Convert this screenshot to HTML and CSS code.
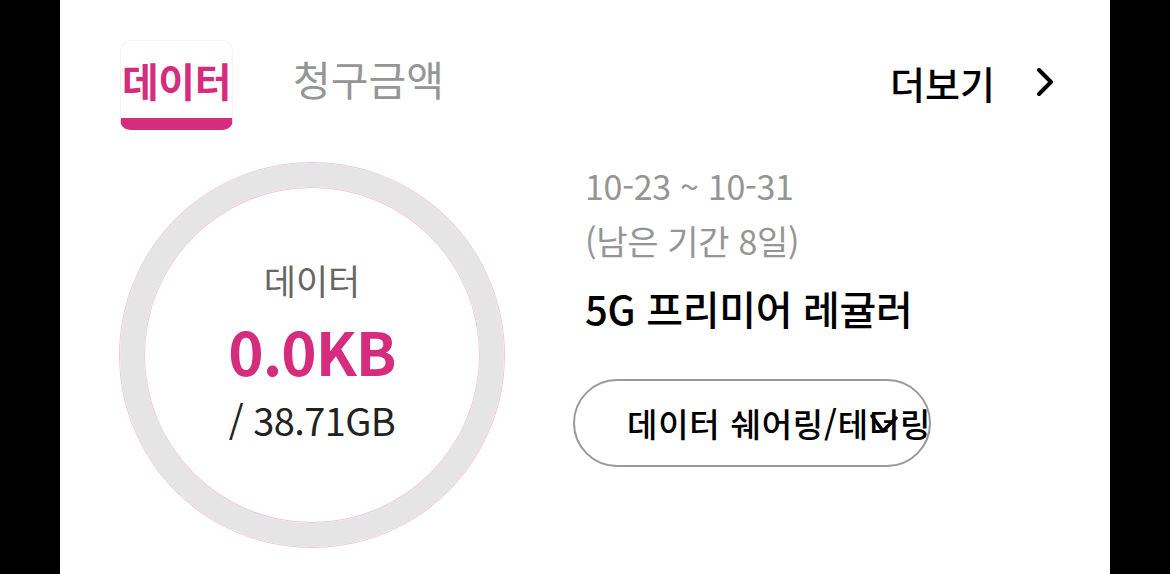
FILE: index.html
```html
<!DOCTYPE html>
<html lang="ko">
<head>
    <meta charset="UTF-8">
    <title>데이터 사용량</title>
    <link rel="stylesheet" href="styles.css">
</head>
<body>
    <div class="card">
        <div class="header">
            <div class="tabs">
                <div class="tab active">데이터</div>
                <div class="tab">청구금액</div>
            </div>
            <div class="more">
                <span>더보기</span>
                <svg width="22" height="32" viewBox="0 0 22 32">
                    <path d="M4 4 L16 16 L4 28" fill="none" stroke="#000" stroke-width="4" stroke-linecap="round" stroke-linejoin="round"/>
                </svg>
            </div>
        </div>

        <div class="usage">
            <div class="ring">
                <div class="ring-label">데이터</div>
                <div class="ring-used">0.0KB</div>
                <div class="ring-total">/ 38.71GB</div>
            </div>

            <div class="info">
                <div class="period">10-23 ~ 10-31</div>
                <div class="period">(남은 기간 8일)</div>
                <div class="plan">5G 프리미어 레귤러</div>
                <div class="share-btn">
                    <span class="share-text">데이터 쉐어링/테더링</span>
                    <svg class="share-arrow" width="30" height="24" viewBox="0 0 30 24">
                        <path d="M3 4 L14 19 L27 6" fill="none" stroke="#000" stroke-width="3.5" stroke-linecap="round" stroke-linejoin="round"/>
                    </svg>
                </div>
            </div>
        </div>
    </div>
</body>
</html>
```

FILE: styles.css
```css
:root {
    --pink: #d52c7e;
    --ring-gray: #e5e5e5;
    --light-text: #959595;
}

body {
    margin: 0;
    background: #000;
    font-family: "Noto Sans CJK KR", "Noto Sans", sans-serif;
}

.card {
    background: #fff;
    width: 1050px;
    height: 574px;
    margin-left: 60px;
    padding: 40px 53px 0 60px;
    box-sizing: border-box;
    overflow: hidden;
}

/* 상단 탭 */
.header {
    display: flex;
    justify-content: space-between;
    align-items: flex-start;
}
.tabs {
    display: flex;
    gap: 60px;
}
.tab {
    height: 90px;
    line-height: 76px;
    font-size: 41px;
    color: var(--light-text);
}
.tab.active {
    width: 113px;
    box-sizing: border-box;
    text-align: center;
    color: var(--pink);
    font-size: 40px;
    font-weight: 700;
    border: 1px solid rgba(213, 44, 126, 0.07);
    border-bottom: 12px solid var(--pink);
    border-radius: 12px 12px 10px 10px;
    line-height: 78px;
    letter-spacing: -0.5px;
}
.more {
    display: flex;
    align-items: center;
    gap: 40px;
    height: 84px;
    font-size: 38px;
    font-weight: 500;
    color: #000;
}

/* 사용량 영역 */
.usage {
    display: flex;
    align-items: flex-start;
    gap: 69px;
    margin-top: 28px;
}
.ring {
    width: 384px;
    height: 384px;
    margin-top: 5px;
    box-sizing: border-box;
    border: 24px solid var(--ring-gray);
    border-radius: 50%;
    box-shadow: 0 0 0 1px #f3c6dd, inset 0 0 0 1px #f3c6dd;
    display: flex;
    flex-direction: column;
    align-items: center;
    justify-content: center;
    padding-bottom: 10px;
}
.ring-label {
    font-size: 35px;
    line-height: 70px;
    color: #666;
}
.ring-used {
    font-size: 60px;
    line-height: 70px;
    font-weight: 700;
    color: var(--pink);
    letter-spacing: -1px;
}
.ring-total {
    font-size: 38px;
    line-height: 70px;
    color: #222;
    letter-spacing: -0.6px;
}

.info {
    display: flex;
    flex-direction: column;
}
.period {
    font-size: 34px;
    line-height: 55px;
    color: var(--light-text);
    padding-left: 12px;
    letter-spacing: -0.3px;
}
.plan {
    font-size: 40px;
    line-height: 60px;
    font-weight: 500;
    color: #000;
    padding-left: 12px;
    margin-top: 10px;
    letter-spacing: -0.3px;
}
.share-btn {
    position: relative;
    width: 358px;
    height: 88px;
    margin-top: 41px;
    box-sizing: border-box;
    border: 2px solid #999;
    border-radius: 44px;
    overflow: hidden;
    white-space: nowrap;
    display: flex;
    align-items: center;
    padding-left: 52px;
    font-size: 33px;
    font-weight: 500;
    color: #000;
    letter-spacing: 0.8px;
}
.share-arrow {
    position: absolute;
    left: 294px;
    top: 31px;
}
```
